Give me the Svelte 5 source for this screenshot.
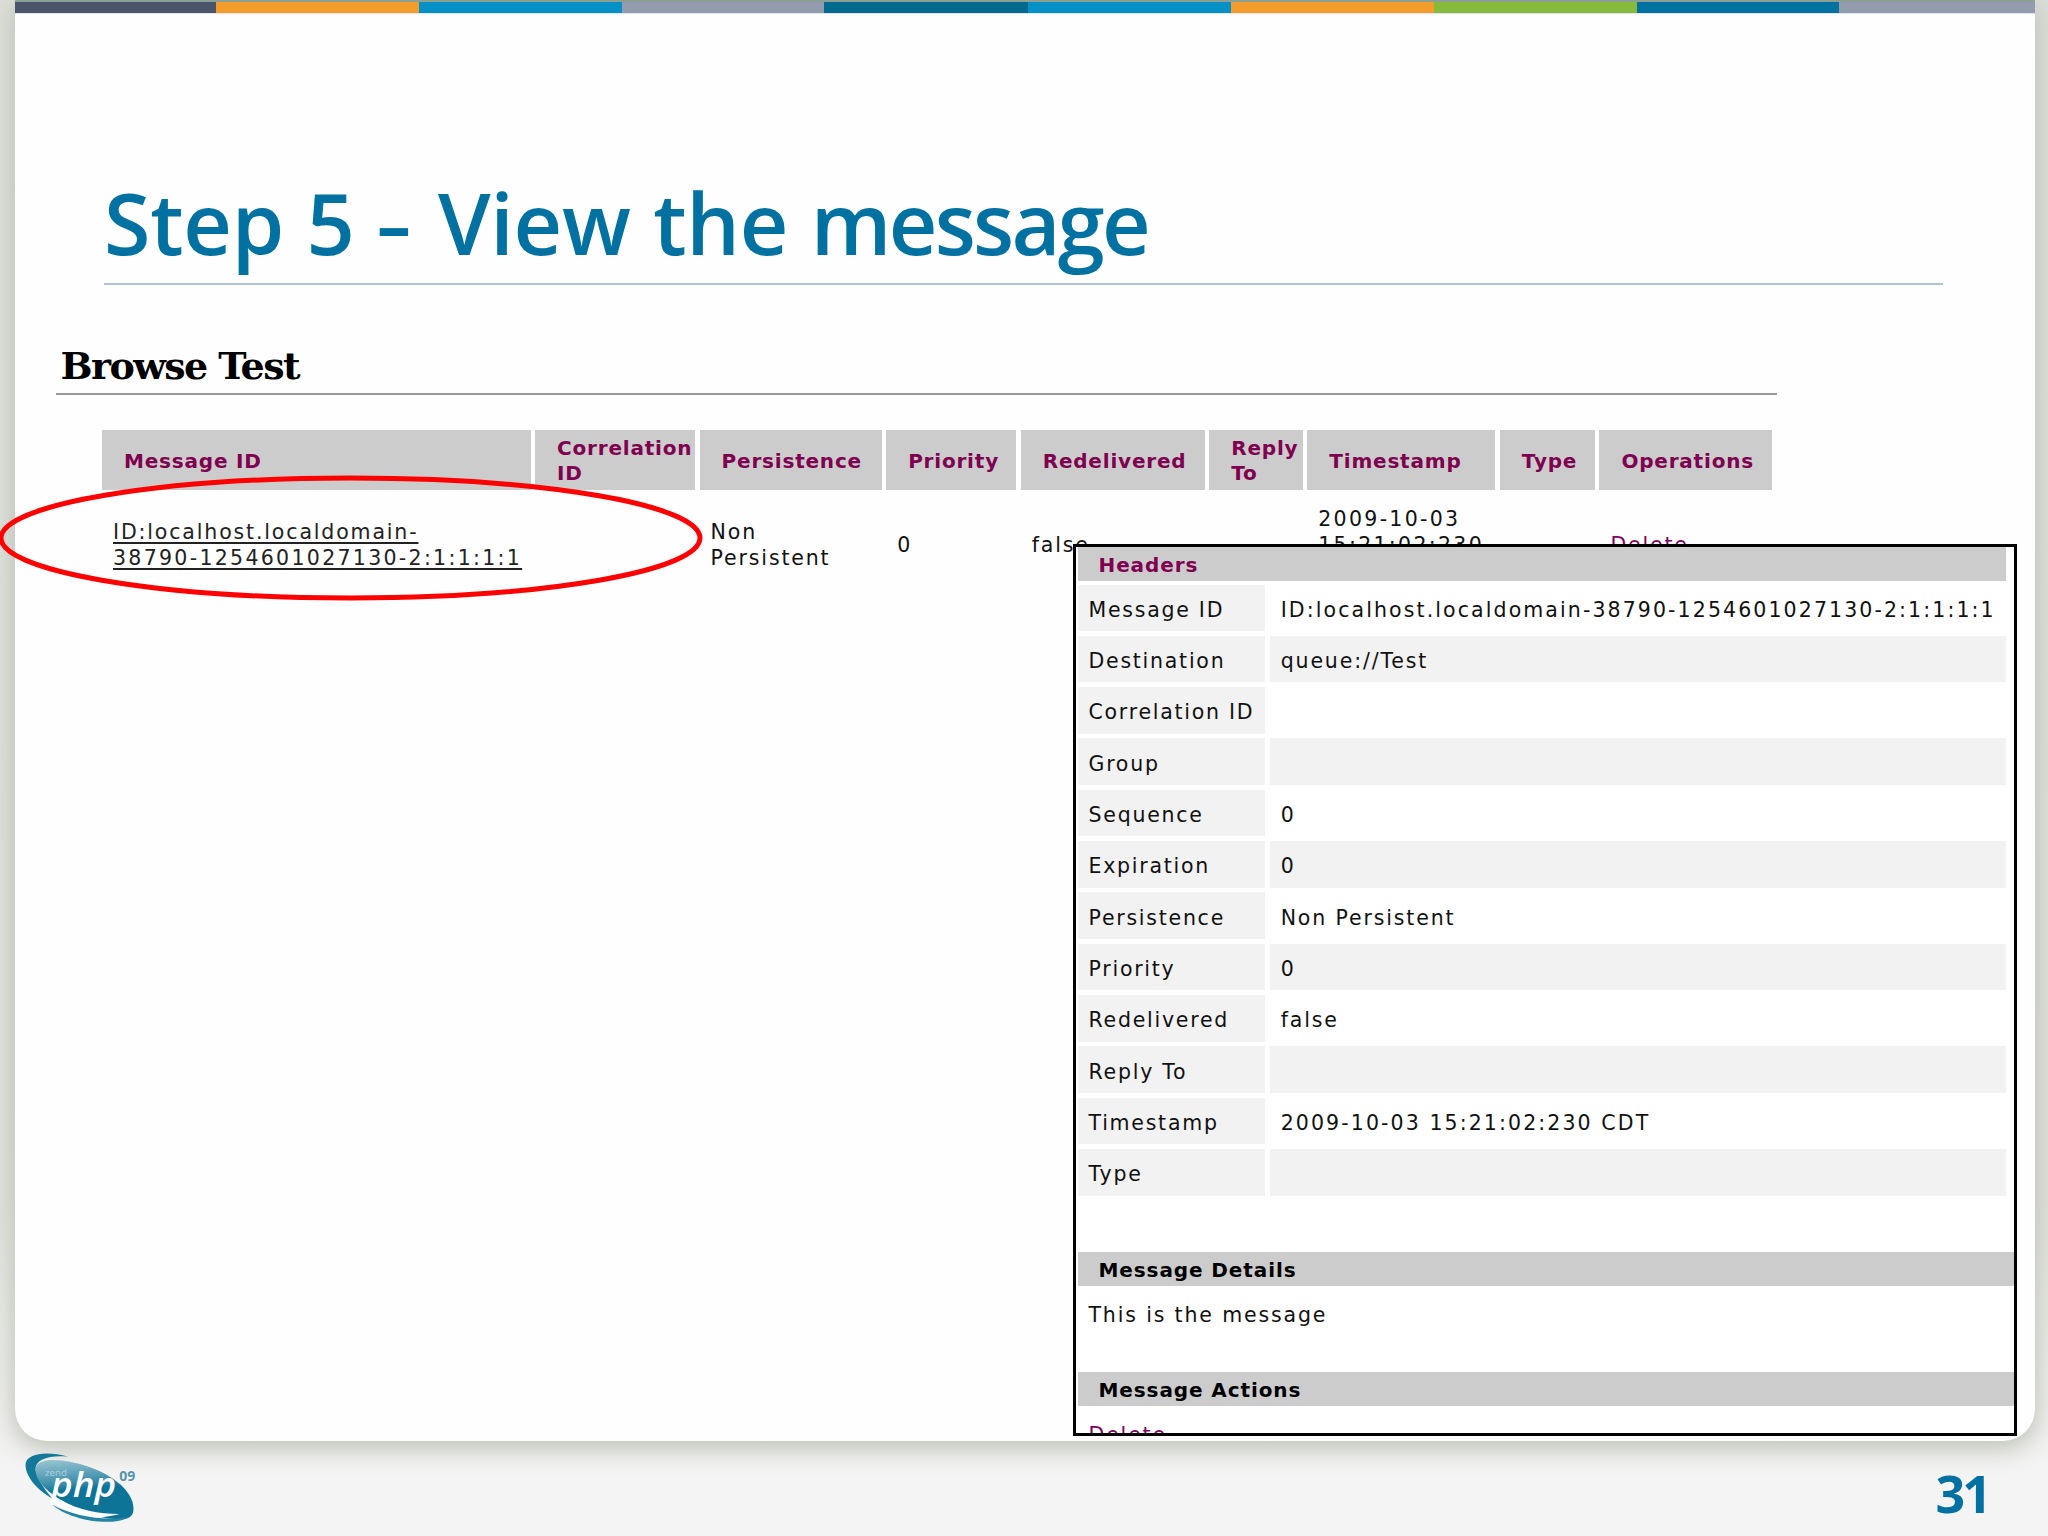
<script lang="ts">
    const stripes = [
        { width: 200.5, color: "#4b5569" },
        { width: 203, color: "#f29c2c" },
        { width: 203, color: "#0690c6" },
        { width: 202, color: "#929cae" },
        { width: 204, color: "#036a8f" },
        { width: 203, color: "#0690c6" },
        { width: 203, color: "#f29c2c" },
        { width: 203, color: "#86b93c" },
        { width: 202, color: "#0071a1" },
        { width: 196, color: "#929cae" },
    ];

    const columns = [
        "Message ID",
        "Correlation ID",
        "Persistence",
        "Priority",
        "Redelivered",
        "Reply To",
        "Timestamp",
        "Type",
        "Operations",
    ];

    const headers = [
        { name: "Message ID", value: "ID:localhost.localdomain-38790-1254601027130-2:1:1:1:1" },
        { name: "Destination", value: "queue://Test" },
        { name: "Correlation ID", value: "" },
        { name: "Group", value: "" },
        { name: "Sequence", value: "0" },
        { name: "Expiration", value: "0" },
        { name: "Persistence", value: "Non Persistent" },
        { name: "Priority", value: "0" },
        { name: "Redelivered", value: "false" },
        { name: "Reply To", value: "" },
        { name: "Timestamp", value: "2009-10-03 15:21:02:230 CDT" },
        { name: "Type", value: "" },
    ];
</script>

<div class="slide">
    <main class="card">
        <div class="stripes">
            {#each stripes as stripe}
                <div style="flex-grow: {stripe.width}; background-color: {stripe.color}"></div>
            {/each}
        </div>

        <h1>Step 5 <span class="dash">–</span> View the <span class="tight">message</span></h1>

        <section class="browse">
            <h2>Browse Test</h2>
            <div class="grid">
                {#each columns as column}
                    <div class="th"><span>{column}</span></div>
                {/each}
                <div class="td"><a href="#message">ID:localhost.localdomain-<br /><span class="digits">38790-1254601027130-2:1:1:1:1</span></a></div>
                <div class="td"></div>
                <div class="td">Non Persistent</div>
                <div class="td">0</div>
                <div class="td">false</div>
                <div class="td"></div>
                <div class="td digits">2009-10-03 15:21:02:230 CDT</div>
                <div class="td"></div>
                <div class="td delete">Delete</div>
            </div>
        </section>
    </main>

    <footer>
        <svg class="logo" viewBox="0 0 390 258">
            <defs>
                <linearGradient id="shine" x1="0" y1="0" x2="0.15" y2="1">
                    <stop offset="0" stop-color="#9cc7d4" />
                    <stop offset="0.42" stop-color="#3f8fab" />
                    <stop offset="0.55" stop-color="#0d7397" />
                </linearGradient>
            </defs>
            <path d="M160 38 C95 20 38 28 32 58 C28 92 62 136 112 164 C84 130 58 92 62 70 C66 44 106 32 160 38Z" fill="#14789a" />
            <path d="M64 66 C82 36 170 46 246 78 C320 110 364 162 354 206 C346 230 310 230 262 220 C180 200 44 130 64 66Z" fill="url(#shine)" />
            <path d="M104 166 C154 214 240 232 314 210 C250 210 190 198 138 168Z" fill="#fff" />
            <path d="M112 182 C160 226 290 252 344 218 C270 232 180 218 112 182Z" fill="#2484a4" />
            <text class="tiny" x="90" y="97" textLength="66" lengthAdjust="spacingAndGlyphs">zend</text>
            <text class="php" x="108" y="160" textLength="196" lengthAdjust="spacingAndGlyphs">php</text>
            <text class="year" x="313" y="110" textLength="48" lengthAdjust="spacingAndGlyphs">09</text>
        </svg>
        <span class="page">31</span>
    </footer>

    <svg class="marker" viewBox="0 0 704 128">
        <ellipse cx="350.5" cy="64" rx="349.5" ry="60" />
    </svg>

    <aside class="panel">
        <h3 class="bar purple">Headers</h3>
        <div class="rows">
            {#each headers as header, i}
                <div class="name">{header.name}</div>
                <div class="value" class:odd={i % 2 == 1} class:digits={header.value.includes("-")}>{header.value}</div>
            {/each}
        </div>
        <h3 class="bar full">Message Details</h3>
        <p>This is the message</p>
        <h3 class="bar full">Message Actions</h3>
        <p class="delete">Delete</p>
    </aside>
</div>

<style>
    :global(body) {
        background-color: #f4f4f4;
    }

    .slide {
        position: relative;
        box-sizing: border-box;
        width: 2048px;
        height: 1536px;
        padding: 0 13px 0 15px;
        overflow: hidden;
        display: flex;
        flex-direction: column;
        font-family: "DejaVu Sans", Verdana, sans-serif;
        font-size: 20.5px;
        line-height: 25.5px;
        letter-spacing: 1.85px;
        color: #111;
        background: linear-gradient(#dcdfd8 0, #dfe1db 1200px, #f4f4f4 1480px);
    }

    .card {
        height: 1441px;
        flex: none;
        background-color: #fefefe;
        border-radius: 0 0 32px 32px;
        box-shadow: 0 6px 24px 1px #bbbfb5;
    }

    .stripes {
        display: flex;
        height: 11px;
        border-top: 2px solid #8c9f95;
        border-bottom: 1px solid #dfe5e8;
    }

    h1 {
        box-sizing: border-box;
        width: 1839px;
        height: 271px;
        margin: 0 0 0 89px;
        padding-top: 150px;
        border-bottom: 2.5px solid #b0c4d4;
        font-family: "Open Sans", sans-serif;
        font-size: 84.5px;
        font-weight: 600;
        line-height: 118px;
        letter-spacing: -0.3px;
        word-spacing: 1px;
        white-space: nowrap;
        color: #0071a1;
    }

    .dash {
        display: inline-block;
        width: 38px;
        transform: scaleX(0.8);
        transform-origin: left;
    }

    .tight {
        letter-spacing: -2.7px;
    }

    .browse {
        margin-left: 40.5px;
        width: 1721px;
    }

    h2 {
        box-sizing: border-box;
        height: 110px;
        margin: 0;
        padding: 58px 0 0 5px;
        border-bottom: 2px solid #9a9a9a;
        font-family: "DejaVu Serif", Georgia, serif;
        font-size: 38px;
        line-height: 46px;
        letter-spacing: -1.6px;
        color: #000;
    }

    .grid {
        display: grid;
        grid-template-columns: 428.5px 160px 182px 130px 184px 93.5px 188px 95px 173px;
        grid-template-rows: 59.5px 110px;
        column-gap: 4.56px;
        width: max-content;
        margin: 35px 0 0 46.5px;
    }

    .th {
        display: flex;
        align-items: center;
        padding: 3px 0 0 22px;
        background-color: #ccc;
        color: #7f0050;
        font-weight: bold;
        font-size: 20px;
        letter-spacing: 0.8px;
    }

    .td {
        display: flex;
        align-items: center;
        padding: 2px 0 0 11px;
    }

    .td a {
        color: #222;
        text-decoration-thickness: 2px;
        text-underline-offset: 3px;
    }

    .digits {
        letter-spacing: 2.1px;
    }

    .td .digits,
    .td.digits {
        letter-spacing: 2.3px;
    }

    .delete {
        color: #7f0060;
    }

    .marker {
        position: absolute;
        left: 0;
        top: 473.5px;
        width: 704px;
        height: 128px;
    }

    .marker ellipse {
        fill: none;
        stroke: #f00;
        stroke-width: 5;
    }

    .panel {
        position: absolute;
        left: 1072.5px;
        top: 543.5px;
        box-sizing: border-box;
        width: 944px;
        height: 892.5px;
        padding-left: 2px;
        border: 3px solid #000;
        overflow: hidden;
        background-color: #fff;
    }

    .bar {
        box-sizing: border-box;
        height: 34px;
        width: 928px;
        margin: 0;
        padding: 6px 0 0 21px;
        background-color: #ccc;
        font-size: 20px;
        letter-spacing: 0.9px;
        color: #000;
    }

    .bar.full {
        width: 100%;
    }

    .bar.purple {
        color: #7f0050;
    }

    .rows {
        display: grid;
        grid-template-columns: 187.5px 736px;
        grid-auto-rows: 46.65px;
        gap: 4.7px;
        padding: 4px 0 56px;
    }

    .name,
    .value {
        display: flex;
        align-items: center;
        box-sizing: border-box;
        padding: 5px 0 0 11px;
        white-space: nowrap;
    }

    .name {
        letter-spacing: 1.75px;
    }

    .name,
    .odd {
        background-color: #f2f2f2;
    }

    .panel p {
        height: 86px;
        margin: 0;
        padding: 17px 0 0 11px;
        box-sizing: border-box;
    }

    footer {
        display: flex;
        justify-content: space-between;
        height: 95px;
    }

    .logo {
        width: 130px;
        height: 86px;
        margin-top: 3px;
    }

    .logo text {
        font-family: "Open Sans", sans-serif;
        letter-spacing: 0;
    }

    .tiny {
        font-size: 26px;
        fill: #a9d3df;
    }

    .php {
        font-size: 104px;
        font-style: italic;
        font-weight: 600;
        fill: #fff;
    }

    .year {
        font-size: 42px;
        font-weight: bold;
        fill: #5796ad;
    }

    .page {
        margin: 17px 46px 0 0;
        font-family: "Open Sans", sans-serif;
        font-size: 52px;
        font-weight: bold;
        line-height: 70px;
        letter-spacing: -3px;
        color: #0071a1;
    }
</style>
